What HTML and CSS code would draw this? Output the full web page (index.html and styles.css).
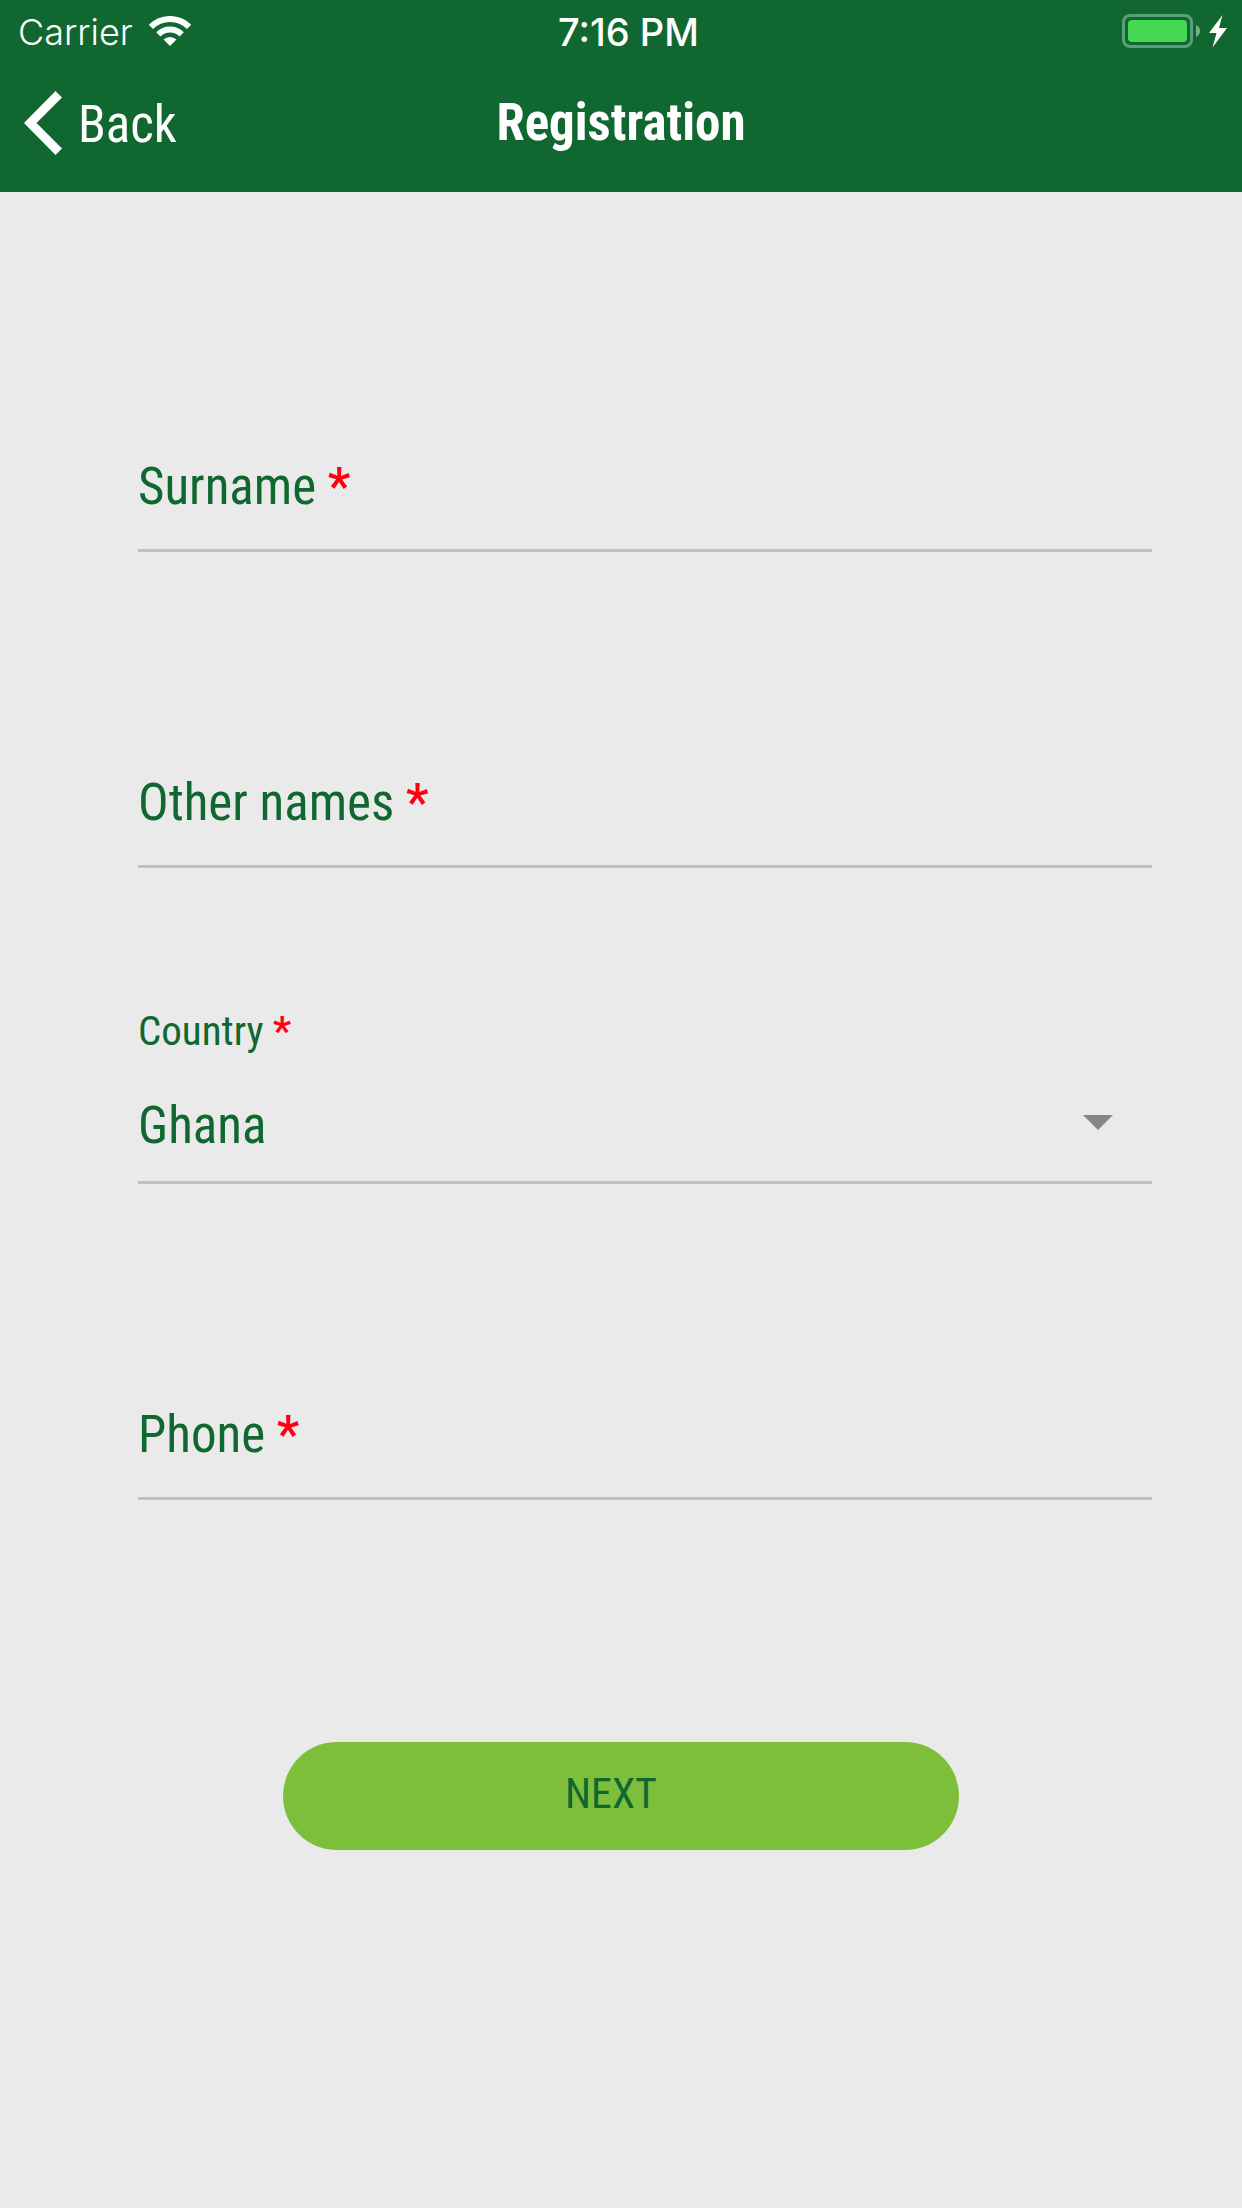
FILE: index.html
```
<!DOCTYPE html>
<html lang="en">
<head>
    <meta charset="UTF-8">
    <meta name="viewport" content="width=device-width, initial-scale=1.0">
    <title>Registration</title>
    <link rel="stylesheet" href="styles.css">
</head>
<body>

<header class="top">
    <div class="status-bar">
        <div class="carrier">
            <span>Carrier</span>
            <svg width="42" height="30" viewBox="0 0 42 30" aria-hidden="true">
                <path d="M1.9 10.9a27 27 0 0 1 38.2 0M9.3 18.3a16.5 16.5 0 0 1 23.4 0" fill="none" stroke="#fff" stroke-width="6"/>
                <path d="M21 30l-6.4-6.4a9 9 0 0 1 12.8 0z" fill="#fff"/>
            </svg>
        </div>
        <span class="clock">7:16 PM</span>
        <svg class="battery" width="105" height="34" viewBox="0 0 105 34" aria-hidden="true">
            <rect x="1.5" y="1.5" width="68" height="31" rx="6.5" fill="none" stroke="#58a078" stroke-width="3"/>
            <rect x="6" y="6" width="59" height="22" rx="4" fill="#44d853"/>
            <path d="M74 11q4 1.500 4 6t-4 6z" fill="#70af8a"/>
            <path d="M100.500 1L87 19h7.500L90.500 33.500 105 14h-8z" fill="#fff"/>
        </svg>
    </div>
    <nav class="nav-bar">
        <button type="button" class="back">
            <svg width="38" height="64" viewBox="0 0 38 64" aria-hidden="true">
                <path d="M31.500 0L38 6.500 12.500 32 38 57.500 31.500 64 0 32z" fill="#fff"/>
            </svg>
            <span>Back</span>
        </button>
        <h1>Registration</h1>
    </nav>
</header>

<form class="form">
    <div class="field">
        <div class="control">
            <label for="surname">Surname <span class="req">*</span></label>
            <input type="text" id="surname" name="surname" autocomplete="off" required>
        </div>
    </div>

    <div class="field">
        <div class="control">
            <label for="names">Other names <span class="req">*</span></label>
            <input type="text" id="names" name="names" autocomplete="off" required>
        </div>
    </div>

    <div class="field">
        <label class="small" for="country">Country <span class="req">*</span></label>
        <div class="control">
            <select id="country" name="country" required>
                <option>Ghana</option>
            </select>
            <svg class="arrow" width="30" height="15" viewBox="0 0 30 15" aria-hidden="true">
                <path d="M0 0h30L15 15z" fill="#868686"/>
            </svg>
        </div>
    </div>

    <div class="field">
        <div class="control">
            <label for="phone">Phone <span class="req">*</span></label>
            <input type="tel" id="phone" name="phone" autocomplete="off" required>
        </div>
    </div>

    <button type="submit" class="next">NEXT</button>
</form>

</body>
</html>
```

FILE: styles.css
```
:root { --green: #106830; --lime: #7dbf3b; --bg: #eaeaea; --line: #c0c0c0; --red: #ff0010; }

* { box-sizing: border-box; }

body { margin: 0; min-height: 100vh; background: var(--bg); color: var(--green); font-family: "Roboto Condensed", Roboto, sans-serif; font-size: 51px; line-height: 60px; }

button, input, select { font: inherit; color: inherit; border: none; border-radius: 0; background: none; margin: 0; padding: 0; outline: none; }
input, select { box-shadow: none; }
svg { display: block; flex: none; }

/* --- Header --- */
.top { background: var(--green); color: #fff; }

.status-bar { display: grid; grid-template-columns: 1fr auto 1fr; align-items: center; height: 60px; padding: 0 15px 0 18px; font-family: Inter, sans-serif; font-size: 36px; line-height: 60px; }
.carrier { display: flex; align-items: center; gap: 16px; font-weight: 300; }
.carrier span, .clock { padding-top: 2px; }
.clock { padding-left: 12px; font-size: 38px; font-weight: 500; }
.battery { justify-self: end; }

.nav-bar { display: grid; grid-template-columns: 1fr auto 1fr; align-items: center; height: 132px; padding: 0 24px 6px; }
.nav-bar h1 { margin: 0; font-size: 51px; font-weight: 700; }
.back { justify-self: start; display: flex; align-items: center; gap: 16px; cursor: pointer; }
.back span { padding-top: 4px; }

/* --- Form --- */
.form { display: flex; flex-direction: column; padding: 44px 90px 60px 138px; }
.field { display: flex; flex-direction: column; justify-content: flex-end; min-height: 316px; }
.small { font-size: 41px; line-height: 48px; }
.req { color: var(--red); font-weight: 500; }

/* label rests on top of the empty input */
.control { display: grid; }
.control > * { grid-area: 1 / 1; }
.control label { align-self: end; padding-bottom: 35px; pointer-events: none; z-index: 1; }
.control input, .control select { width: 100%; height: 129px; border-bottom: 3px solid var(--line); padding: 38px 0 22px; }
.control select { appearance: none; }
.arrow { justify-self: end; align-self: end; margin: 0 39px 54px 0; pointer-events: none; }

.next { align-self: center; width: 676px; max-width: 100%; height: 108px; margin: 242px 48px 0 0; padding: 0 20px 4px 0; border-radius: 54px; background: var(--lime); font-size: 42px; cursor: pointer; }
```
